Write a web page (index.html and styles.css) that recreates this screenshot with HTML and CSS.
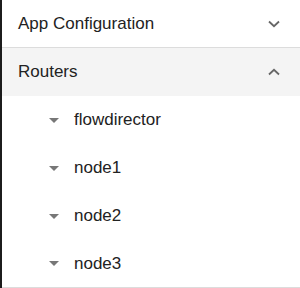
FILE: index.html
```html
<!DOCTYPE html>
<html>
<head>
<meta charset="utf-8">
<link rel="stylesheet" href="styles.css">
</head>
<body>
<div class="panel">
  <div class="section-head">
    <span class="title">App Configuration</span>
    <svg class="chev" width="12" height="8" viewBox="0 0 12 8"><path d="M1 1.5 L6 6.2 L11 1.5" fill="none" stroke="#666" stroke-width="1.8"/></svg>
  </div>
  <div class="section-head active">
    <span class="title">Routers</span>
    <svg class="chev" width="12" height="8" viewBox="0 0 12 8"><path d="M1 6.5 L6 1.8 L11 6.5" fill="none" stroke="#666" stroke-width="1.8"/></svg>
  </div>
  <ul class="items">
    <li class="item"><span class="caret"></span><span class="label">flowdirector</span></li>
    <li class="item"><span class="caret"></span><span class="label">node1</span></li>
    <li class="item"><span class="caret"></span><span class="label">node2</span></li>
    <li class="item last"><span class="caret"></span><span class="label">node3</span></li>
  </ul>
</div>
</body>
</html>
```
FILE: styles.css
```css
html, body {
  margin: 0;
  padding: 0;
  background: #fff;
}
body {
  font-family: "Liberation Sans", Arial, sans-serif;
  color: #222;
}
.panel {
  width: 298px;
  height: 288px;
  border-left: 2px solid #1c1c1c;
  overflow: hidden;
}
.section-head {
  height: 47px;
  border-bottom: 1px solid #dcdcdc;
  display: flex;
  align-items: center;
  justify-content: space-between;
  padding: 0 20px 0 16px;
  font-size: 17px;
}
.section-head.active {
  background: #f4f4f4;
  border-bottom: none;
  height: 48px;
}
.chev {
  display: block;
}
.items {
  list-style: none;
  margin: 0;
  padding: 0;
}
.item {
  height: 48px;
  display: flex;
  align-items: center;
  padding-left: 47px;
  font-size: 17px;
}
.item.last {
  height: 47px;
  border-bottom: 1px solid #dcdcdc;
}
.caret {
  width: 0;
  height: 0;
  border-left: 5px solid transparent;
  border-right: 5px solid transparent;
  border-top: 5px solid #777;
  margin-right: 15px;
}
```
